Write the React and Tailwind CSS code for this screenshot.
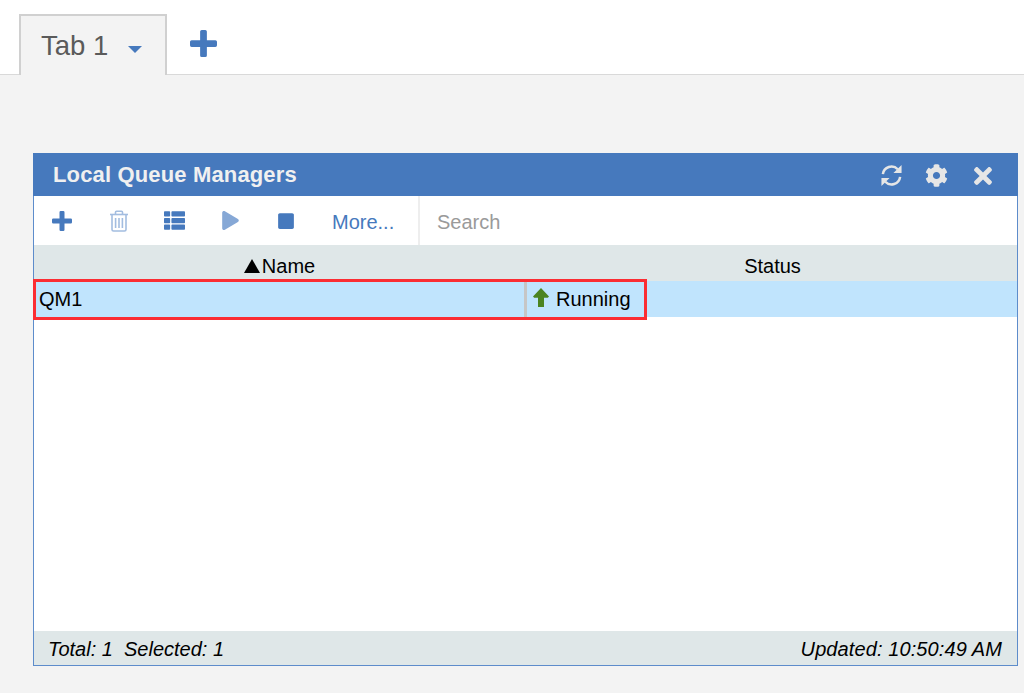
import { FaThList, FaPlay, FaStop, FaCog, FaTimes } from 'react-icons/fa';

function PlusIcon({ className }) {
  return (
    <svg viewBox="0 0 20 20" fill="currentColor" className={className}>
      <path d="M7.5 1.2q0-1.2 1.2-1.2h2.6q1.2 0 1.2 1.2v6.3h6.3q1.2 0 1.2 1.2v2.6q0 1.2-1.2 1.2h-6.3v6.3q0 1.2-1.2 1.2H8.7q-1.2 0-1.2-1.2v-6.3H1.2Q0 12.5 0 11.3V8.7q0-1.2 1.2-1.2h6.3z" />
    </svg>
  );
}

function RefreshIcon({ className }) {
  return (
    <svg viewBox="0 0 24 24" className={className}>
      <path d="M3 10.5A9 9 0 0 1 18.5 5.5M21 13.5A9 9 0 0 1 5.5 18.5" fill="none" stroke="currentColor" strokeWidth="2.6" />
      <path d="M22.5 1v8.5H14zM1.5 23v-8.5H10z" fill="currentColor" />
    </svg>
  );
}

function TrashIcon({ className }) {
  return (
    <svg viewBox="0 0 20 22" fill="none" stroke="currentColor" strokeWidth="1.6" className={className}>
      <path d="M1 4.5h18" />
      <path d="M6.5 4V2.2q0-1 1-1h5q1 0 1 1V4" />
      <path d="M3 5v14.5q0 1.5 1.5 1.5h11q1.5 0 1.5-1.5V5" />
      <path d="M6.6 8v10M10 8v10M13.4 8v10" />
    </svg>
  );
}

function ArrowUpIcon({ className }) {
  return (
    <svg viewBox="0 0 16 19" fill="currentColor" className={className}>
      <path d="M8 0l8 8.6-1.2 1.2H11V19H5V9.8H1.2L0 8.6z" />
    </svg>
  );
}

function ToolSlot({ children }) {
  return <div className="flex w-[56px] items-center justify-center">{children}</div>;
}

export default function App() {
  return (
    <div className="h-[693px] w-[1024px] overflow-hidden bg-[#f3f3f3] font-['Liberation_Sans',sans-serif]">
      <div className="flex h-[75px] items-end border-b border-[#d9d9d9] bg-white pl-[19px]">
        <div className="-mb-px flex h-[61px] w-[148px] items-center border-x-2 border-t-2 border-[#d0d0d0] bg-[#f3f3f3] pl-5">
          <span className="text-[27.5px] leading-none text-[#5a5a5a]">Tab 1</span>
          <span className="ml-[20px] mt-[7px] h-0 w-0 border-x-[7.5px] border-t-[7.5px] border-x-transparent border-t-[#4679bd]" />
        </div>
        <div className="flex h-[61px] items-center pl-[23px] text-[#4679bd]">
          <PlusIcon className="h-[27px] w-[27px]" />
        </div>
      </div>

      <div className="relative ml-[33px] mt-[78px] flex h-[513px] w-[985px] flex-col border border-[#5d8ccb] bg-white">
        <div className="-mx-px -mt-px flex h-[43px] shrink-0 items-center justify-between bg-[#4679bd] pl-5 pr-[22px]">
          <span className="pt-px text-[22px] font-bold leading-none tracking-[0.15px] text-[#f0f0f0]">Local Queue Managers</span>
          <div className="flex items-center gap-[22px] pt-[2px] text-[#e6e6e6]">
            <RefreshIcon className="h-[23px] w-[23px]" />
            <FaCog className="h-[23px] w-[23px]" />
            <FaTimes className="h-[26px] w-[26px]" />
          </div>
        </div>

        <div className="flex h-[49px] shrink-0 items-center">
          <div className="flex h-full w-[386px] items-center border-r-2 border-[#eeeeee] text-[#4679bd]">
            <ToolSlot><PlusIcon className="h-[20px] w-[20px]" /></ToolSlot>
            <ToolSlot><TrashIcon className="ml-px h-[22px] w-[20px] text-[#a3bde0]" /></ToolSlot>
            <ToolSlot><FaThList className="h-[21px] w-[21px]" /></ToolSlot>
            <ToolSlot><FaPlay className="h-[19px] w-[19px] text-[#86a8d6]" /></ToolSlot>
            <ToolSlot><FaStop className="h-[18px] w-[18px]" /></ToolSlot>
            <span className="ml-[18px] pt-[3px] text-[20px] leading-none">More...</span>
          </div>
          <span className="pl-[17px] pt-[3px] text-[20px] leading-none text-[#9a9a9a]">Search</span>
        </div>

        <div className="grid h-[36px] shrink-0 grid-cols-[491px_1fr] items-center bg-[#dfe7e8] pt-[5px] text-[20px] leading-none text-black">
          <div className="flex items-center justify-center">
            <span className="mr-[2px] h-0 w-0 border-x-[8px] border-b-[14px] border-x-transparent border-b-black" />
            <span>Name</span>
          </div>
          <div className="pl-[3px] text-center">Status</div>
        </div>

        <div className="grid h-[36px] shrink-0 grid-cols-[493px_1fr] items-center bg-[#c0e4fd] text-[20px] leading-none text-black">
          <div className="flex h-full items-center border-r-[3px] border-[#c6c6c6] pb-px pl-[5px]">QM1</div>
          <div className="flex items-center pb-px pl-[6px]">
            <ArrowUpIcon className="mb-[3px] h-[19px] w-[16px] text-[#4b8420]" />
            <span className="ml-[7px]">Running</span>
          </div>
        </div>

        <div className="min-h-0 flex-1" />

        <div className="flex h-[34px] shrink-0 items-center justify-between bg-[#dfe7e8] pl-[14px] pr-[15px] pt-[2px] text-[20px] italic leading-none text-black">
          <span className="whitespace-pre">Total: 1  Selected: 1</span>
          <span className="tracking-[0.1px]">Updated: 10:50:49 AM</span>
        </div>

        <div className="absolute left-[-1px] top-[125px] h-[41px] w-[614px] border-[3px] border-[#fb2d33]" />
      </div>
    </div>
  );
}
